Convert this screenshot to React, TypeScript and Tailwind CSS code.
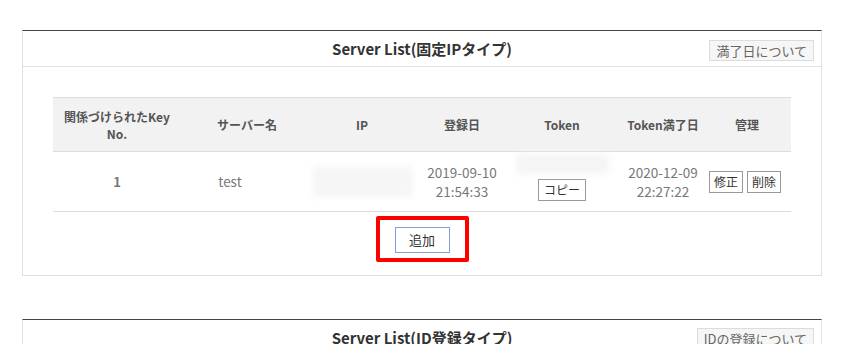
import React from "react";

const font = { fontFamily: '"Noto Sans CJK JP", "Noto Sans", sans-serif' };

function PanelHeader({ title, help }: { title: string; help: string }) {
  return (
    <div className="grid grid-cols-[1fr_auto_1fr] items-center h-[36px] border-b border-[#e0e0e0]">
      <div />
      <div className="text-[15px] font-bold text-[#333] leading-none">{title}</div>
      <div className="justify-self-end mr-[7px]">
        <button className="h-[21px] px-[6px] text-[13px] leading-none text-[#666] bg-[#f6f6f6] border border-[#dcdcdc] whitespace-nowrap">
          {help}
        </button>
      </div>
    </div>
  );
}

export default function App() {
  const th = "font-bold text-[12px] text-[#555] leading-[17px] text-center align-middle";
  const td = "text-[13.5px] text-[#777] leading-[19px] text-center align-middle";
  const small = "h-[22px] px-[4px] text-[12px] leading-none text-[#333] bg-white border border-[#999]";

  return (
    <div className="w-[858px] h-[344px] bg-white overflow-hidden" style={font}>
      {/* Server List (固定IP) */}
      <div className="ml-[22px] mt-[30px] w-[800px] border border-[#e0e0e0] border-t-[#444]">
        <PanelHeader title="Server List(固定IPタイプ)" help="満了日について" />

        <div className="px-[30px] pt-[30px] pb-[13px]">
          <table className="w-[738px] table-fixed border-collapse">
            <colgroup>
              <col className="w-[128px]" />
              <col className="w-[132px]" />
              <col className="w-[98px]" />
              <col className="w-[102px]" />
              <col className="w-[98px]" />
              <col className="w-[104px]" />
              <col className="w-[76px]" />
            </colgroup>
            <thead>
              <tr className="h-[54px] bg-[#f2f2f2] border-t border-b border-[#dcdcdc]">
                <th className={th}>関係づけられたKey<br />No.</th>
                <th className={th}>サーバー名</th>
                <th className={th}>IP</th>
                <th className={th}>登録日</th>
                <th className={th}>Token</th>
                <th className={th}>Token満了日</th>
                <th className={th + " pr-[12px]"}>管理</th>
              </tr>
            </thead>
            <tbody>
              <tr className="h-[60px] border-b border-[#dcdcdc]">
                <td className={td + " font-bold text-[#666] text-[13px]"}>1</td>
                <td className={td + " text-[#666] pr-[34px]"}>test</td>
                <td className={td}>
                  <div className="mx-auto w-[100px] h-[31px] bg-[#f6f6f6] blur-[3px]" />
                </td>
                <td className={td}>
                  <div>2019-09-10</div>
                  <div>21:54:33</div>
                </td>
                <td className="text-center align-top pt-[2px]">
                  <div className="mx-auto w-[93px] h-[20px] bg-[#f5f5f5] blur-[3px]" />
                  <button className={small + " mt-[5px] w-[48px] text-[#222]"}>コピー</button>
                </td>
                <td className={td}>
                  <div>2020-12-09</div>
                  <div>22:27:22</div>
                </td>
                <td className="text-center align-middle pr-[12px] whitespace-nowrap">
                  <div className="flex justify-center gap-[4px] -ml-[4px]">
                    <button className={small + " w-[36px]"}>修正</button>
                    <button className={small + " w-[36px]"}>削除</button>
                  </div>
                </td>
              </tr>
            </tbody>
          </table>

          <div className="flex justify-center mt-[4px]">
            <div className="border-[4px] border-[#ff0000] rounded-[2px] px-[15px] pt-[6px] pb-[5px]">
              <button className="w-[55px] h-[26px] text-[13px] leading-none text-[#333] bg-white border border-[#7f9fdf]">
                追加
              </button>
            </div>
          </div>
        </div>
      </div>

      {/* Server List (ID登録) */}
      <div className="ml-[22px] mt-[43px] w-[800px] border border-[#e0e0e0] border-t-[#444]">
        <PanelHeader title="Server List(ID登録タイプ)" help="IDの登録について" />
      </div>
    </div>
  );
}
